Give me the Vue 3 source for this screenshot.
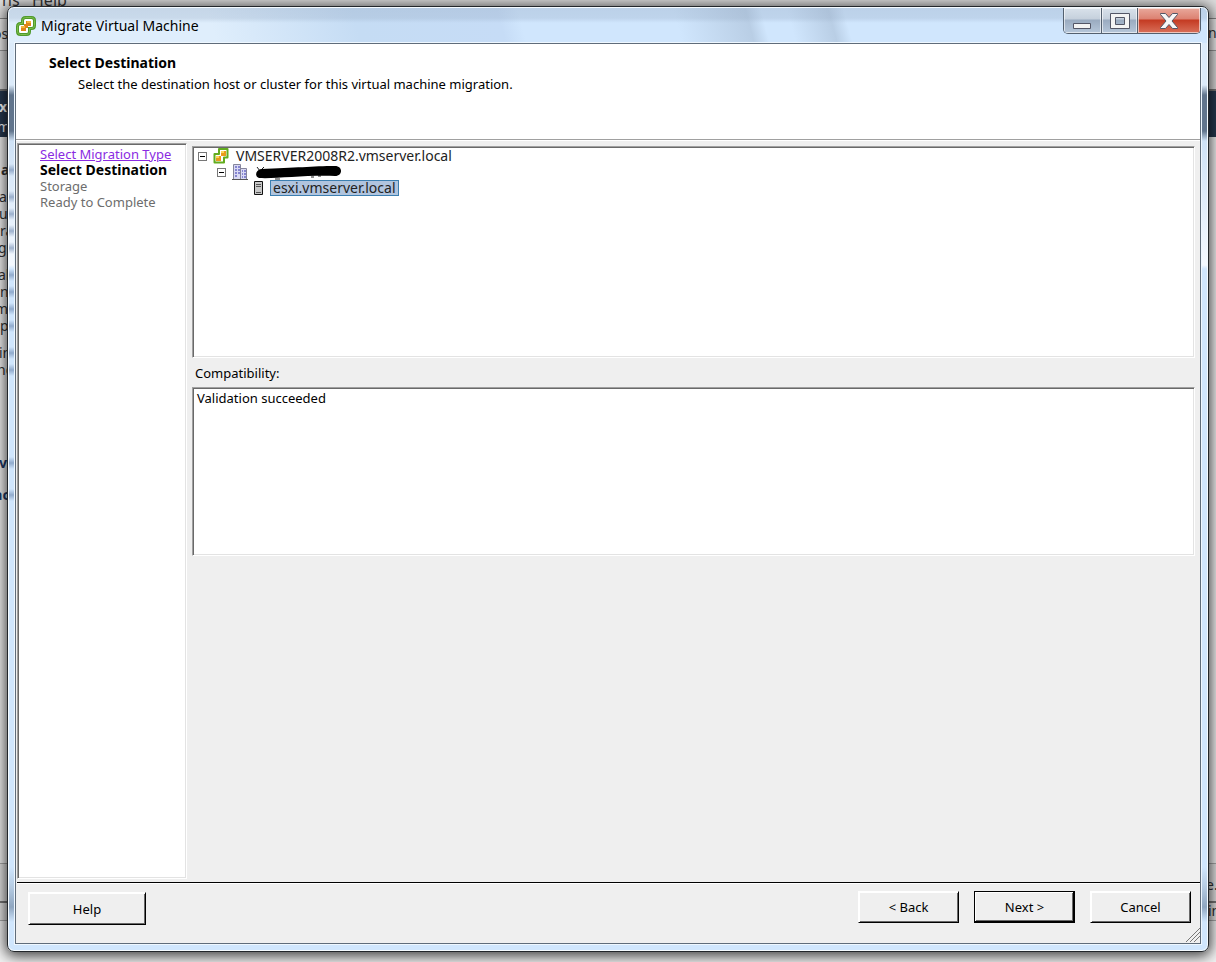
<script setup>
import { ref } from 'vue'

const title = 'Migrate Virtual Machine'

// wizard steps
const steps = [
  { label: 'Select Migration Type', state: 'done' },
  { label: 'Select Destination', state: 'current' },
  { label: 'Storage', state: 'pending' },
  { label: 'Ready to Complete', state: 'pending' },
]

const selected = ref('esxi.vmserver.local')

// pieces of the window behind, left and right of the dialog
const behind = [
  { text: 'ns', top: -10, left: 2, type: 'menu' },
  { text: 'Help', top: -10, left: 32, type: 'menu' },
  { text: 'os', top: 24, left: -7, type: 'plain' },
  { text: 'xi', top: 97, left: -1, type: 'light bold' },
  { text: 'm', top: 117, left: -3, type: 'light' },
  { text: 'a', top: 160, left: 1, type: 'bold' },
  { text: 'a', top: 187, left: -1, type: 'plain' },
  { text: 'u', top: 204, left: -1, type: 'plain' },
  { text: 'ra', top: 221, left: 0, type: 'plain' },
  { text: 'gu', top: 238, left: -2, type: 'plain' },
  { text: 'al', top: 265, left: -2, type: 'plain' },
  { text: 'n', top: 282, left: 0, type: 'plain' },
  { text: 'me', top: 299, left: -5, type: 'plain' },
  { text: 'p', top: 316, left: 0, type: 'plain' },
  { text: 'in', top: 343, left: -1, type: 'plain' },
  { text: 'no', top: 360, left: -3, type: 'plain' },
  { text: 'v', top: 453, left: -1, type: 'blue bold' },
  { text: 'ac', top: 485, left: -6, type: 'blue bold' },
  { text: 'nv', top: 23, left: 1208, type: 'plain' },
  { text: 'e.', top: 875, left: 1206, type: 'plain' },
  { text: 'in', top: 901, left: 1208, type: 'plain' },
]

// text that shines through the glass of the left edge
const smudges = behind.filter((item) => item.left < 8 && item.top > 150)
</script>

<template>
  <div class="desktop">
    <div class="behind" aria-hidden="true">
      <div class="behind-toolbar"></div>
      <div class="behind-banner"></div>
      <div class="behind-status"></div>
      <span
        v-for="(item, i) in behind"
        :key="i"
        class="piece"
        :class="item.type"
        :style="{ top: item.top + 'px', left: item.left + 'px' }"
        >{{ item.text }}</span
      >
    </div>

    <div class="window">
      <i
        v-for="item in smudges"
        :key="item.top"
        class="smudge"
        :style="{ top: item.top - 3 + 'px' }"
      ></i>
      <div class="titlebar">
        <svg class="app-icon" viewBox="0 0 20 20">
          <path
            d="M9.500 1.500h6q3 0 3 3v5q0 3-3 3h-2v3q0 3-3 3h-6q-3 0-3-3v-5q0-3 3-3h2v-3q0-3 3-3z"
            fill="#fff"
            stroke="#4f9a2c"
            stroke-width="3"
          />
          <path
            d="M9.500 1.500h6q3 0 3 3v5q0 3-3 3h-2v3q0 3-3 3h-6q-3 0-3-3v-5q0-3 3-3h2v-3q0-3 3-3z"
            fill="none"
            stroke="#7fbf4d"
            stroke-width="1"
          />
          <path d="M10 5h5v5h-3v2h-2v3H5v-5h3V8h2z" fill="#e0861a" />
          <path d="M11 5h4v2h-4zM5 10h4v2H5z" fill="#f4b53c" />
        </svg>
        <h1>{{ title }}</h1>
        <div class="controls">
          <button type="button" class="min" aria-label="Minimize">
            <svg width="19" height="16" viewBox="0 0 19 16">
              <path d="M.5 10.500h17v5H.5z" fill="#f4f4f4" stroke="#535666" />
            </svg>
          </button>
          <button type="button" class="max" aria-label="Maximize">
            <svg width="20" height="16" viewBox="0 0 20 16">
              <path
                d="M.5.5h19v15H.5zM5.500 4.500v7h9v-7z"
                fill="#f4f4f4"
                fill-rule="evenodd"
                stroke="#535666"
              />
            </svg>
          </button>
          <button type="button" class="close" aria-label="Close">
            <svg width="18" height="16" viewBox="0 0 18 16">
              <path
                d="M.5.5h5L9 4.500l3.500-4h5v1L12 8l5.500 6.500v1h-5L9 11.500l-3.500 4h-5v-1L6 8 .5 1.500z"
                fill="#f6f6f6"
                stroke="#535666"
              />
            </svg>
          </button>
        </div>
      </div>

      <div class="client">
        <header>
          <h2>Select Destination</h2>
          <p>Select the destination host or cluster for this virtual machine migration.</p>
        </header>

        <div class="body">
          <nav class="sunken steps">
            <template v-for="step in steps" :key="step.label">
              <a v-if="step.state === 'done'" href="#">{{ step.label }}</a>
              <span v-else :class="step.state">{{ step.label }}</span>
            </template>
          </nav>

          <main>
            <div class="sunken tree">
              <div class="row">
                <button type="button" class="toggle" aria-label="Collapse"></button>
                <svg class="icon" viewBox="0 0 16 16">
                  <path
                    d="M7 1h7.500v8.500H11v5H1.500V6H6V1z"
                    fill="#fff"
                    stroke="#62ac1e"
                    stroke-width="2"
                    stroke-linejoin="round"
                  />
                  <path d="M8 3h5v5H8zM3 8h5v5H3z" fill="#e99a1c" />
                  <path d="M8 3h3v2H8zM3 8h3v2H3z" fill="#fbd75b" />
                </svg>
                <span class="name">VMSERVER2008R2.vmserver.local</span>
              </div>
              <div class="row level-1">
                <button type="button" class="toggle" aria-label="Collapse"></button>
                <svg class="icon" viewBox="0 0 16 16">
                  <path d="M1.500.5h7v15h-7z" fill="#d9d9f4" stroke="#85859c" />
                  <path d="M8.500 4.500h6v11h-6z" fill="#d9d9f4" stroke="#85859c" />
                  <path
                    d="M3 2h2v2H3zM6 2h2v2H6zM3 5h2v2H3zM6 5h2v2H6zM3 8h2v2H3zM6 8h2v2H6zM3 11h2v2H3zM10 6h1v2h-1zM12 6h2v2h-2zM10 9h1v2h-1zM12 9h2v2h-2zM10 12h1v2h-1zM12 12h2v2h-2z"
                    fill="#8585d0"
                  />
                  <path d="M0 15.500h16" stroke="#555" />
                </svg>
                <svg class="scribble" width="88" height="16" viewBox="0 0 88 16">
                  <path d="M2 3l3 4 4-4M20 15h5M56 13h3M63 12h3" fill="none" stroke="#222" />
                  <path
                    d="M6 5C1 6-1 12 4 14C20 15 50 11 80 12C88 12 88 2 80 2C58 2 40 4 6 5z"
                    fill="#000"
                  />
                </svg>
              </div>
              <div class="row level-2">
                <svg class="host" viewBox="0 0 9 14">
                  <path d="M.5.5h8v13h-8z" fill="#c8c8c8" stroke="#111" />
                  <path d="M2 3.500h5M2 5.500h5M2 11.500h5" stroke="#555" />
                </svg>
                <button type="button" class="name node" :class="{ selected }">{{ selected }}</button>
              </div>
            </div>
            <h3>Compatibility:</h3>
            <div class="sunken result">Validation succeeded</div>
          </main>
        </div>

        <footer>
          <button type="button" class="push help">Help</button>
          <div class="actions">
            <button type="button" class="push">&lt; Back</button>
            <button type="button" class="push default">Next &gt;</button>
            <button type="button" class="push">Cancel</button>
          </div>
          <svg class="grip" width="14" height="14" viewBox="0 0 14 14">
            <path d="M0 14L14 0M4 14L14 4M8 14L14 8" stroke="#777" stroke-width="1" />
          </svg>
        </footer>
      </div>
    </div>
  </div>
</template>

<style>
body {
  margin: 0;
}
</style>

<style scoped>
* {
  box-sizing: border-box;
}

.desktop {
  position: relative;
  display: flex;
  min-height: 100vh;
  padding: 6px 7px 10px;
  overflow: hidden;
  background: #f2f2f2;
  color: #000;
  font: 13px/16px 'Noto Sans', 'Liberation Sans', sans-serif;
}

h1,
h2,
h3,
p {
  margin: 0;
  font-size: 13px;
  font-weight: normal;
}

button {
  padding: 0;
  color: inherit;
  font: inherit;
}

/* window behind */
.behind {
  position: absolute;
  inset: 0;
  overflow: hidden;
}

.behind-toolbar {
  height: 91px;
  border-bottom: 2px solid #777;
  background: linear-gradient(#ddd 0 18px, #888 18px 19px, #eee 19px 50px, #999 50px 51px, #ddd 51px);
}

.behind-banner {
  height: 46px;
  background: #263850;
}

.behind-status {
  position: absolute;
  top: 863px;
  right: 0;
  left: 0;
  height: 58px;
  border-top: 1px solid #aaa;
  border-bottom: 1px solid #aaa;
  background: linear-gradient(#e4e4e4 0 37px, #777 37px 39px, #e4e4e4 39px);
}

.piece {
  position: absolute;
  font-size: 14px;
  line-height: 20px;
  color: #333;
  white-space: nowrap;
}

.piece.menu {
  font-size: 16px;
}

.piece.bold {
  font-weight: bold;
}

.piece.light {
  color: #fff;
}

.piece.blue {
  color: #1d3a68;
}

/* dialog frame */
.window {
  position: relative;
  display: flex;
  flex: 1;
  flex-direction: column;
  min-width: 0;
  padding: 0 7px 7px;
  border: 1px solid #22262a;
  border-radius: 7px;
  background:
    linear-gradient(#dcebfa 0, #dcebfa 78px, #61758d 88px, #61758d 124px, #cfe2f6 134px, #f4f9ff 258px, #d0e6fd 262px, #d0e6fd 860px, #b5cbe2 880px, #8fa6c0 900px, #d0e6fd 915px);
  box-shadow:
    inset 0 0 0 1px #f5fbff,
    0 2px 14px 2px rgba(0, 0, 0, 0.75);
}

.smudge {
  position: absolute;
  left: 1px;
  width: 5px;
  height: 12px;
  background: linear-gradient(transparent, rgba(80, 110, 155, 0.5), transparent);
}

.titlebar {
  display: flex;
  align-items: center;
  height: 35px;
  margin: 1px -6px 0;
  padding-left: 7px;
  border-radius: 5px 5px 0 0;
  background:
    linear-gradient(rgba(150, 170, 195, 0.35), rgba(150, 170, 195, 0.3) 10px, transparent 15px),
    linear-gradient(75deg, #dfeefc 0, #dfeefc 200px, #c5dcf4 340px, #c6dcf6 480px, #d0e6fd 500px, #d0e6fd 650px, #b9cee5 720px, #d0e6fd 735px, #d0e6fd 760px, #b9cee5 800px, #d0e6fd 815px);
}

.app-icon {
  width: 20px;
  height: 20px;
}

h1 {
  flex: 1;
  padding-left: 5px;
  font-size: 14px;
  line-height: 20px;
}

.controls {
  display: flex;
  align-self: flex-start;
  height: 26px;
  margin-right: 6px;
  border: 1px solid #53606f;
  border-top: 0;
  border-radius: 0 0 5px 5px;
  overflow: hidden;
}

.controls button {
  display: flex;
  align-items: center;
  justify-content: center;
  border: 0;
  border-right: 1px solid #53606f;
  background: linear-gradient(#d9e2eb, #c5d0dc 11px, #9aabc0 12px, #b6c7da);
  box-shadow: inset 0 0 0 1px rgba(255, 255, 255, 0.6);
}

.controls .min {
  width: 38px;
}

.controls .max {
  width: 36px;
}

.controls .close {
  width: 62px;
  border-right: 0;
  background: linear-gradient(#e9a99c, #dc8171 11px, #c43a22 12px, #d9705a);
}

.client {
  display: flex;
  flex: 1;
  flex-direction: column;
  border: 1px solid #5f6c7a;
  background: #efefef;
  box-shadow: 0 0 0 1px #eef7ff;
}

header {
  height: 96px;
  padding: 11px 33px;
  border-bottom: 1px solid #a0a0a0;
  background: #fff;
}

h2 {
  font-size: 14px;
  font-weight: bold;
}

header p {
  padding: 5px 0 0 29px;
}

.body {
  display: flex;
  flex: 1;
  gap: 5px;
  padding: 2px 5px 3px 1px;
  border-top: 1px solid #fff;
}

.sunken {
  border: 1px solid #a0a0a0;
  border-right-color: #fff;
  border-bottom-color: #fff;
  background: #fff;
  box-shadow:
    inset 1px 1px #696969,
    inset -1px -1px #e3e3e3;
}

.steps {
  display: flex;
  flex-direction: column;
  width: 170px;
  padding: 2px 0 0 22px;
}

.steps a {
  color: #8a2be2;
}

.current {
  font-size: 14px;
  font-weight: bold;
}

.pending {
  color: #6d6d6d;
}

main {
  flex: 1;
  min-width: 0;
  padding-top: 3px;
}

.tree {
  height: 212px;
  padding: 1px 5px;
}

.row {
  display: flex;
  align-items: center;
  height: 16px;
}

.level-1 {
  padding-left: 19px;
}

.level-2 {
  padding-left: 56px;
}

.toggle {
  width: 9px;
  height: 9px;
  border: 1px solid #777;
  background: linear-gradient(#000, #000) center / 5px 1px no-repeat #fff;
}

.icon {
  width: 16px;
  height: 16px;
  margin: 0 7px 0 6px;
}

.host {
  width: 9px;
  height: 14px;
  margin-right: 7px;
}

.name {
  color: #222;
  font-size: 14px;
}

.node {
  height: 16px;
  padding: 0 2px;
  border: 1px solid transparent;
  background: none;
  line-height: 14px;
}

.node.selected {
  border-color: #3c7fb1;
  background: #b0c4de;
}

h3 {
  padding: 7px 3px 6px;
}

.result {
  height: 169px;
  padding: 2px 4px;
}

footer {
  position: relative;
  display: flex;
  align-items: flex-start;
  justify-content: space-between;
  height: 61px;
  margin-left: 1px;
  padding: 8px 9px 0 11px;
  border-top: 1px solid #000;
  box-shadow: inset 0 1px #fff;
}

.actions {
  display: flex;
  gap: 15px;
}

.push {
  width: 101px;
  height: 32px;
  border: 1px solid;
  border-color: #fff #000 #000 #fff;
  background: #efefef;
  box-shadow:
    inset 1px 1px #fff,
    inset -1px -1px #696969;
}

.help {
  width: 118px;
  height: 33px;
  margin-top: 1px;
}

.default {
  border-color: #000;
  box-shadow:
    inset -1px -1px #000,
    inset 1px 1px #fff,
    inset -2px -2px #696969;
}

.grip {
  position: absolute;
  right: 0;
  bottom: 1px;
}
</style>
